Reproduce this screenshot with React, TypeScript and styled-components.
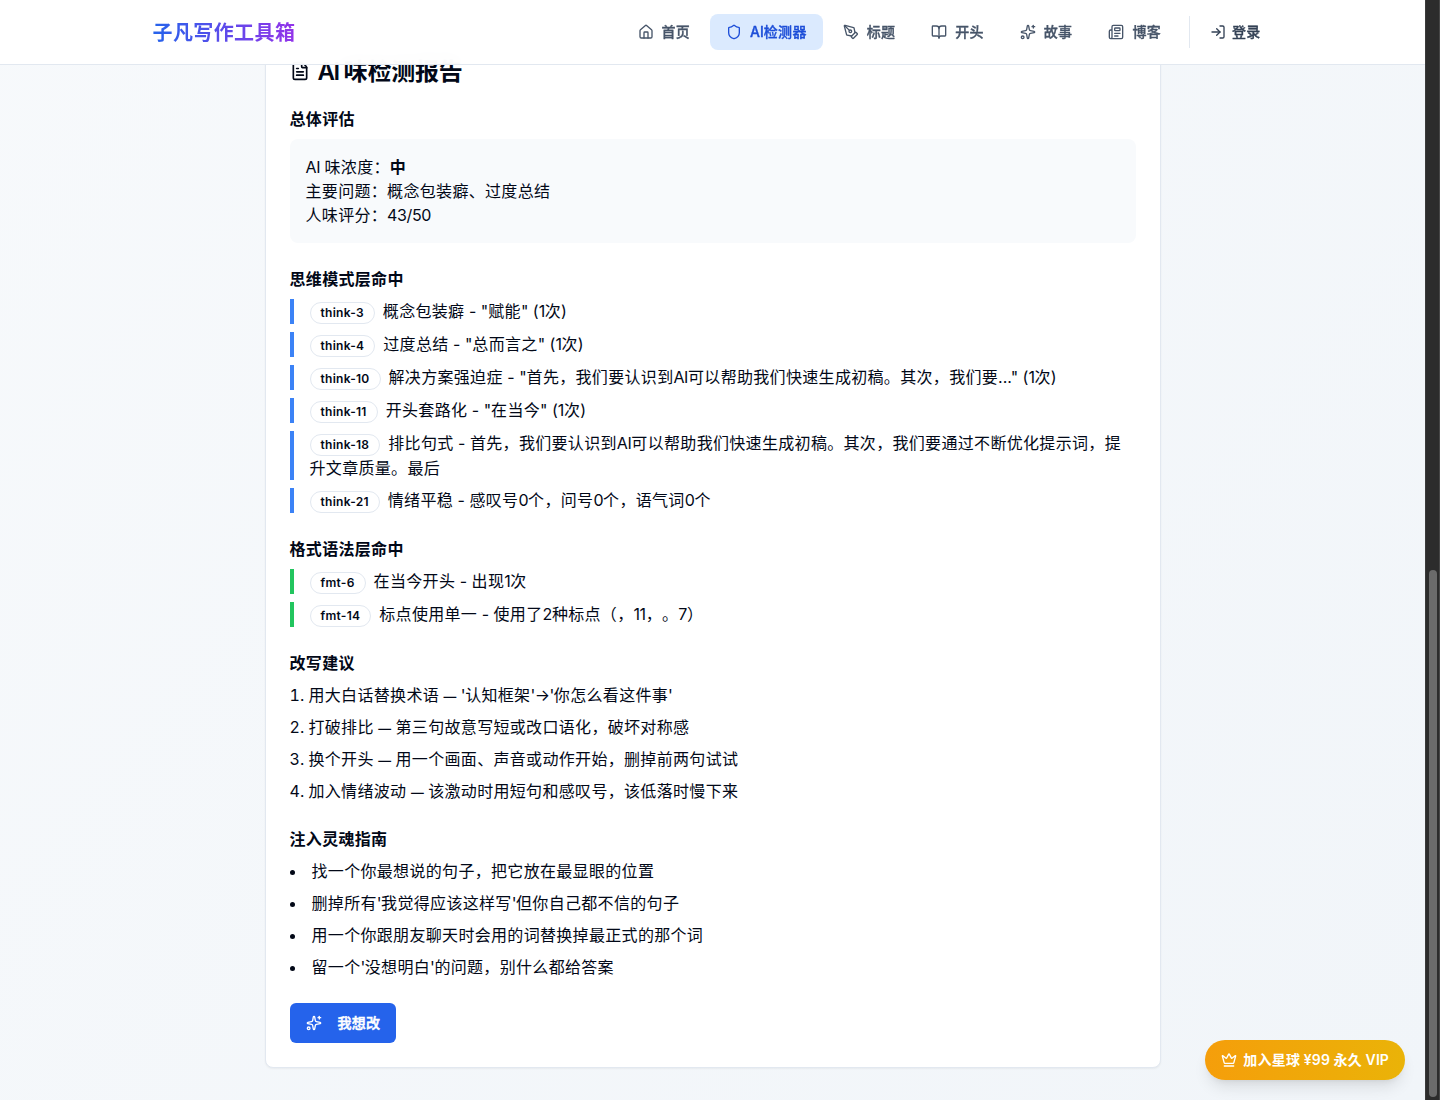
import React from "react";
import styled, { createGlobalStyle, css } from "styled-components";
import {
  BookOpen,
  Crown,
  FileText,
  House,
  LogIn,
  Newspaper,
  PenTool,
  Shield,
  Sparkles,
} from "lucide-react";

const GlobalStyle = createGlobalStyle`
  *, *::before, *::after { box-sizing: border-box; }
  body {
    margin: 0;
    color: #020817;
    font-family: Inter, "Noto Sans CJK SC", sans-serif;
    font-size: 16px;
    line-height: 24px;
    text-spacing-trim: space-all;
    -webkit-font-smoothing: antialiased;
    --han-tracking: 0.02em;
    --latin-tracking: 0;
  }
  h2, h3, p, ul, ol { margin: 0; padding: 0; }
  ul, ol { list-style: none; }
  svg { flex-shrink: 0; display: block; }
`;

const Window = styled.div`
  display: flex;
  height: 1100px;
  overflow: hidden;
`;

/* The gradient spans the whole document, of which the lower part is in view. */
const Page = styled.div`
  position: relative;
  flex: 1;
  min-width: 0;
  overflow: hidden;
  background: linear-gradient(to bottom right, #f8fafc, #f1f5f9) bottom / 100% 150% no-repeat;
`;

const ScrollTrack = styled.div`
  display: flex;
  flex-direction: column;
  justify-content: flex-end;
  align-items: center;
  width: 15px;
  padding-bottom: 3px;
  background: #2c2c2c;
  border-left: 1px solid #3a3a3a;
  border-right: 1px solid #474747;
`;

const ScrollThumb = styled.div`
  width: 8px;
  height: 527px;
  border-radius: 4px;
  background: #6b6b6b;
`;

const Header = styled.header`
  position: absolute;
  inset: 0 0 auto 0;
  z-index: 10;
  border-bottom: 1px solid #e2e8f0;
  background: rgba(255, 255, 255, 0.95);
  backdrop-filter: blur(8px);
`;

const HeaderInner = styled.div`
  display: flex;
  align-items: center;
  justify-content: space-between;
  max-width: 1152px;
  height: 64px;
  margin: 0 auto;
  padding: 0 16px;
`;

const Logo = styled.span`
  padding-top: 1px;
  font-size: 20px;
  font-weight: 700;
  line-height: 28px;
  color: transparent;
  background: linear-gradient(to right, #2563eb, #9333ea);
  background-clip: text;
  -webkit-background-clip: text;
`;

const Nav = styled.nav`
  display: flex;
  align-items: center;
  gap: 4px;
`;

/* Noto has no medium cut here, so a hairline stroke stands in for weight 500. */
const mediumText = css`
  font-size: 14px;
  font-weight: 500;
  line-height: 20px;
  -webkit-text-stroke: 0.35px currentColor;
`;

const NavItem = styled.a<{ $active?: boolean }>`
  ${mediumText}
  display: flex;
  align-items: center;
  gap: 8px;
  padding: 8px 16px;
  border-radius: 8px;
  color: ${(p) => (p.$active ? "#1d4ed8" : "#475569")};
  background: ${(p) => (p.$active ? "#dbeafe" : "transparent")};
`;

const Account = styled.div`
  display: flex;
  align-items: center;
  height: 32px;
  margin-left: 8px;
  padding-left: 8px;
  border-left: 1px solid #e2e8f0;
`;

const LoginLink = styled.a`
  ${mediumText}
  display: flex;
  align-items: center;
  gap: 6px;
  padding: 6px 12px;
  color: #334155;
`;

const Main = styled.main`
  display: flex;
  justify-content: center;
  padding-top: 34px;
`;

const Report = styled.article`
  --latin-tracking: -0.025em;
  display: flex;
  flex-direction: column;
  gap: 24px;
  width: 896px;
  padding: 24px;
  border: 1px solid #e2e8f0;
  border-radius: 8px;
  background: #fff;
  box-shadow: 0 1px 2px rgba(0, 0, 0, 0.05);
`;

const Title = styled.h2`
  --han-tracking: -0.008em;
  --latin-tracking: -0.06em;
  display: flex;
  align-items: center;
  gap: 8px;
  height: 24px;
  font-size: 24px;
  font-weight: 600;
  line-height: 24px;
  letter-spacing: -0.05em;
`;

const TitleText = styled.span`
  padding-top: 2px;
`;

const Section = styled.section`
  display: flex;
  flex-direction: column;
  gap: 8px;
`;

const SectionTitle = styled.h3`
  font-size: 16px;
  font-weight: 600;
  line-height: 24px;
`;

const Summary = styled.div`
  padding: 16px;
  border-radius: 8px;
  background: #f8fafc;
`;

const Strong = styled.span`
  font-weight: 600;
`;

const accents = { blue: "#3b82f6", green: "#22c55e" };

const Finding = styled.li<{ $accent: keyof typeof accents }>`
  padding-left: 16px;
  border-left: 4px solid ${(p) => accents[p.$accent]};
`;

const Badge = styled.span`
  display: inline-flex;
  align-items: center;
  margin-right: 8px;
  padding: 2px 10px;
  border: 1px solid #e2e8f0;
  border-radius: 999px;
  font-size: 12px;
  font-weight: 600;
  line-height: 16px;
  letter-spacing: 0.27px;
`;

const List = styled.ul`
  display: flex;
  flex-direction: column;
  gap: 8px;
`;

const MarkedItem = styled.li<{ $marker: "disc" | "decimal" }>`
  display: list-item;
  list-style: ${(p) => p.$marker} inside;
`;

const buttonBase = css`
  display: inline-flex;
  align-items: center;
  height: 40px;
  padding: 0 16px;
  border: 0;
  font-family: inherit;
  color: #fff;
  white-space: nowrap;
`;

const RewriteButton = styled.button`
  ${buttonBase}
  ${mediumText}
  align-self: flex-start;
  gap: 16px;
  border-radius: 6px;
  background: #2563eb;
  -webkit-text-stroke-width: 0.5px;
`;

const VipButton = styled.button`
  ${buttonBase}
  --latin-tracking: 0.1px;
  position: absolute;
  right: 20px;
  bottom: 20px;
  gap: 6px;
  border-radius: 999px;
  font-size: 14px;
  font-weight: 600;
  line-height: 20px;
  background: linear-gradient(to right, #f59e0b, #eab308);
  box-shadow: 0 10px 15px -3px rgba(0, 0, 0, 0.1), 0 4px 6px -4px rgba(0, 0, 0, 0.1);
`;

const Han = styled.span`
  letter-spacing: var(--han-tracking);
`;

const Latin = styled.span`
  letter-spacing: var(--latin-tracking);
`;

const Dash = styled.span`
  font-size: 0.8em;
  font-weight: 500;
  line-height: 1;
`;

const Tight = styled.span`
  letter-spacing: -0.03em;
`;

/* Each script gets its own tracking, so a line is cut into runs of one script. */
const runs = /[\u3000-\u303f\u4e00-\u9fff\uff00-\uffef]+|[A-Za-z0-9/¥]+|—|['→]+|[^\u3000-\u303f\u4e00-\u9fff\uff00-\uffefA-Za-z0-9/¥—'→]+/g;

function Mixed({ children }: { children: string }) {
  return (
    <>
      {(children.match(runs) ?? []).map((run, i) => {
        if (/^[\u3000-\u9fff\uff00-\uffef]/.test(run)) return <Han key={i}>{run}</Han>;
        if (/^[A-Za-z0-9/¥]/.test(run)) return <Latin key={i}>{run}</Latin>;
        if (run === "—") return <Dash key={i}>{run}</Dash>;
        if (/^['→]/.test(run)) return <Tight key={i}>{run}</Tight>;
        return run;
      })}
    </>
  );
}

const navItems = [
  { label: "首页", Icon: House },
  { label: "AI检测器", Icon: Shield, active: true },
  { label: "标题", Icon: PenTool },
  { label: "开头", Icon: BookOpen },
  { label: "故事", Icon: Sparkles },
  { label: "博客", Icon: Newspaper },
];

const thinking = [
  ["think-3", '概念包装癖 - "赋能" (1次)'],
  ["think-4", '过度总结 - "总而言之" (1次)'],
  ["think-10", '解决方案强迫症 - "首先，我们要认识到AI可以帮助我们快速生成初稿。其次，我们要..." (1次)'],
  ["think-11", '开头套路化 - "在当今" (1次)'],
  ["think-18", "排比句式 - 首先，我们要认识到AI可以帮助我们快速生成初稿。其次，我们要通过不断优化提示词，提升文章质量。最后"],
  ["think-21", "情绪平稳 - 感叹号0个，问号0个，语气词0个"],
];

const formatting = [
  ["fmt-6", "在当今开头 - 出现1次"],
  ["fmt-14", "标点使用单一 - 使用了2种标点（，11，。7）"],
];

const suggestions = [
  "用大白话替换术语 — '认知框架'→'你怎么看这件事'",
  "打破排比 — 第三句故意写短或改口语化，破坏对称感",
  "换个开头 — 用一个画面、声音或动作开始，删掉前两句试试",
  "加入情绪波动 — 该激动时用短句和感叹号，该低落时慢下来",
];

const guide = [
  "找一个你最想说的句子，把它放在最显眼的位置",
  "删掉所有'我觉得应该这样写'但你自己都不信的句子",
  "用一个你跟朋友聊天时会用的词替换掉最正式的那个词",
  "留一个'没想明白'的问题，别什么都给答案",
];

function Findings({ title, rows, accent }: { title: string; rows: string[][]; accent: keyof typeof accents }) {
  return (
    <Section>
      <SectionTitle><Mixed>{title}</Mixed></SectionTitle>
      <List>
        {rows.map(([code, text]) => (
          <Finding key={code} $accent={accent}>
            <Badge>{code}</Badge>
            <Mixed>{text}</Mixed>
          </Finding>
        ))}
      </List>
    </Section>
  );
}

function Notes({ title, items, marker }: { title: string; items: string[]; marker: "disc" | "decimal" }) {
  return (
    <Section>
      <SectionTitle><Mixed>{title}</Mixed></SectionTitle>
      <List as={marker === "decimal" ? "ol" : "ul"}>
        {items.map((text) => (
          <MarkedItem key={text} $marker={marker}><Mixed>{text}</Mixed></MarkedItem>
        ))}
      </List>
    </Section>
  );
}

export default function App() {
  return (
    <Window>
      <GlobalStyle />
      <Page>
        <Header>
          <HeaderInner>
            <Logo><Mixed>子凡写作工具箱</Mixed></Logo>
            <Nav>
              {navItems.map(({ label, Icon, active }) => (
                <NavItem key={label} $active={active}>
                  <Icon size={16} />
                  <span><Mixed>{label}</Mixed></span>
                </NavItem>
              ))}
              <Account>
                <LoginLink>
                  <LogIn size={16} />
                  <span><Mixed>登录</Mixed></span>
                </LoginLink>
              </Account>
            </Nav>
          </HeaderInner>
        </Header>
        <Main>
          <Report>
            <Title>
              <FileText size={20} />
              <TitleText><Mixed>AI 味检测报告</Mixed></TitleText>
            </Title>
            <Section>
              <SectionTitle><Mixed>总体评估</Mixed></SectionTitle>
              <Summary>
                <p><Mixed>AI 味浓度：</Mixed><Strong>中</Strong></p>
                <p><Mixed>主要问题：概念包装癖、过度总结</Mixed></p>
                <p><Mixed>人味评分：43/50</Mixed></p>
              </Summary>
            </Section>
            <Findings title="思维模式层命中" rows={thinking} accent="blue" />
            <Findings title="格式语法层命中" rows={formatting} accent="green" />
            <Notes title="改写建议" items={suggestions} marker="decimal" />
            <Notes title="注入灵魂指南" items={guide} marker="disc" />
            <RewriteButton>
              <Sparkles size={16} />
              <span><Mixed>我想改</Mixed></span>
            </RewriteButton>
          </Report>
        </Main>
        <VipButton>
          <Crown size={16} />
          <span><Mixed>加入星球 ¥99 永久 VIP</Mixed></span>
        </VipButton>
      </Page>
      <ScrollTrack>
        <ScrollThumb />
      </ScrollTrack>
    </Window>
  );
}
